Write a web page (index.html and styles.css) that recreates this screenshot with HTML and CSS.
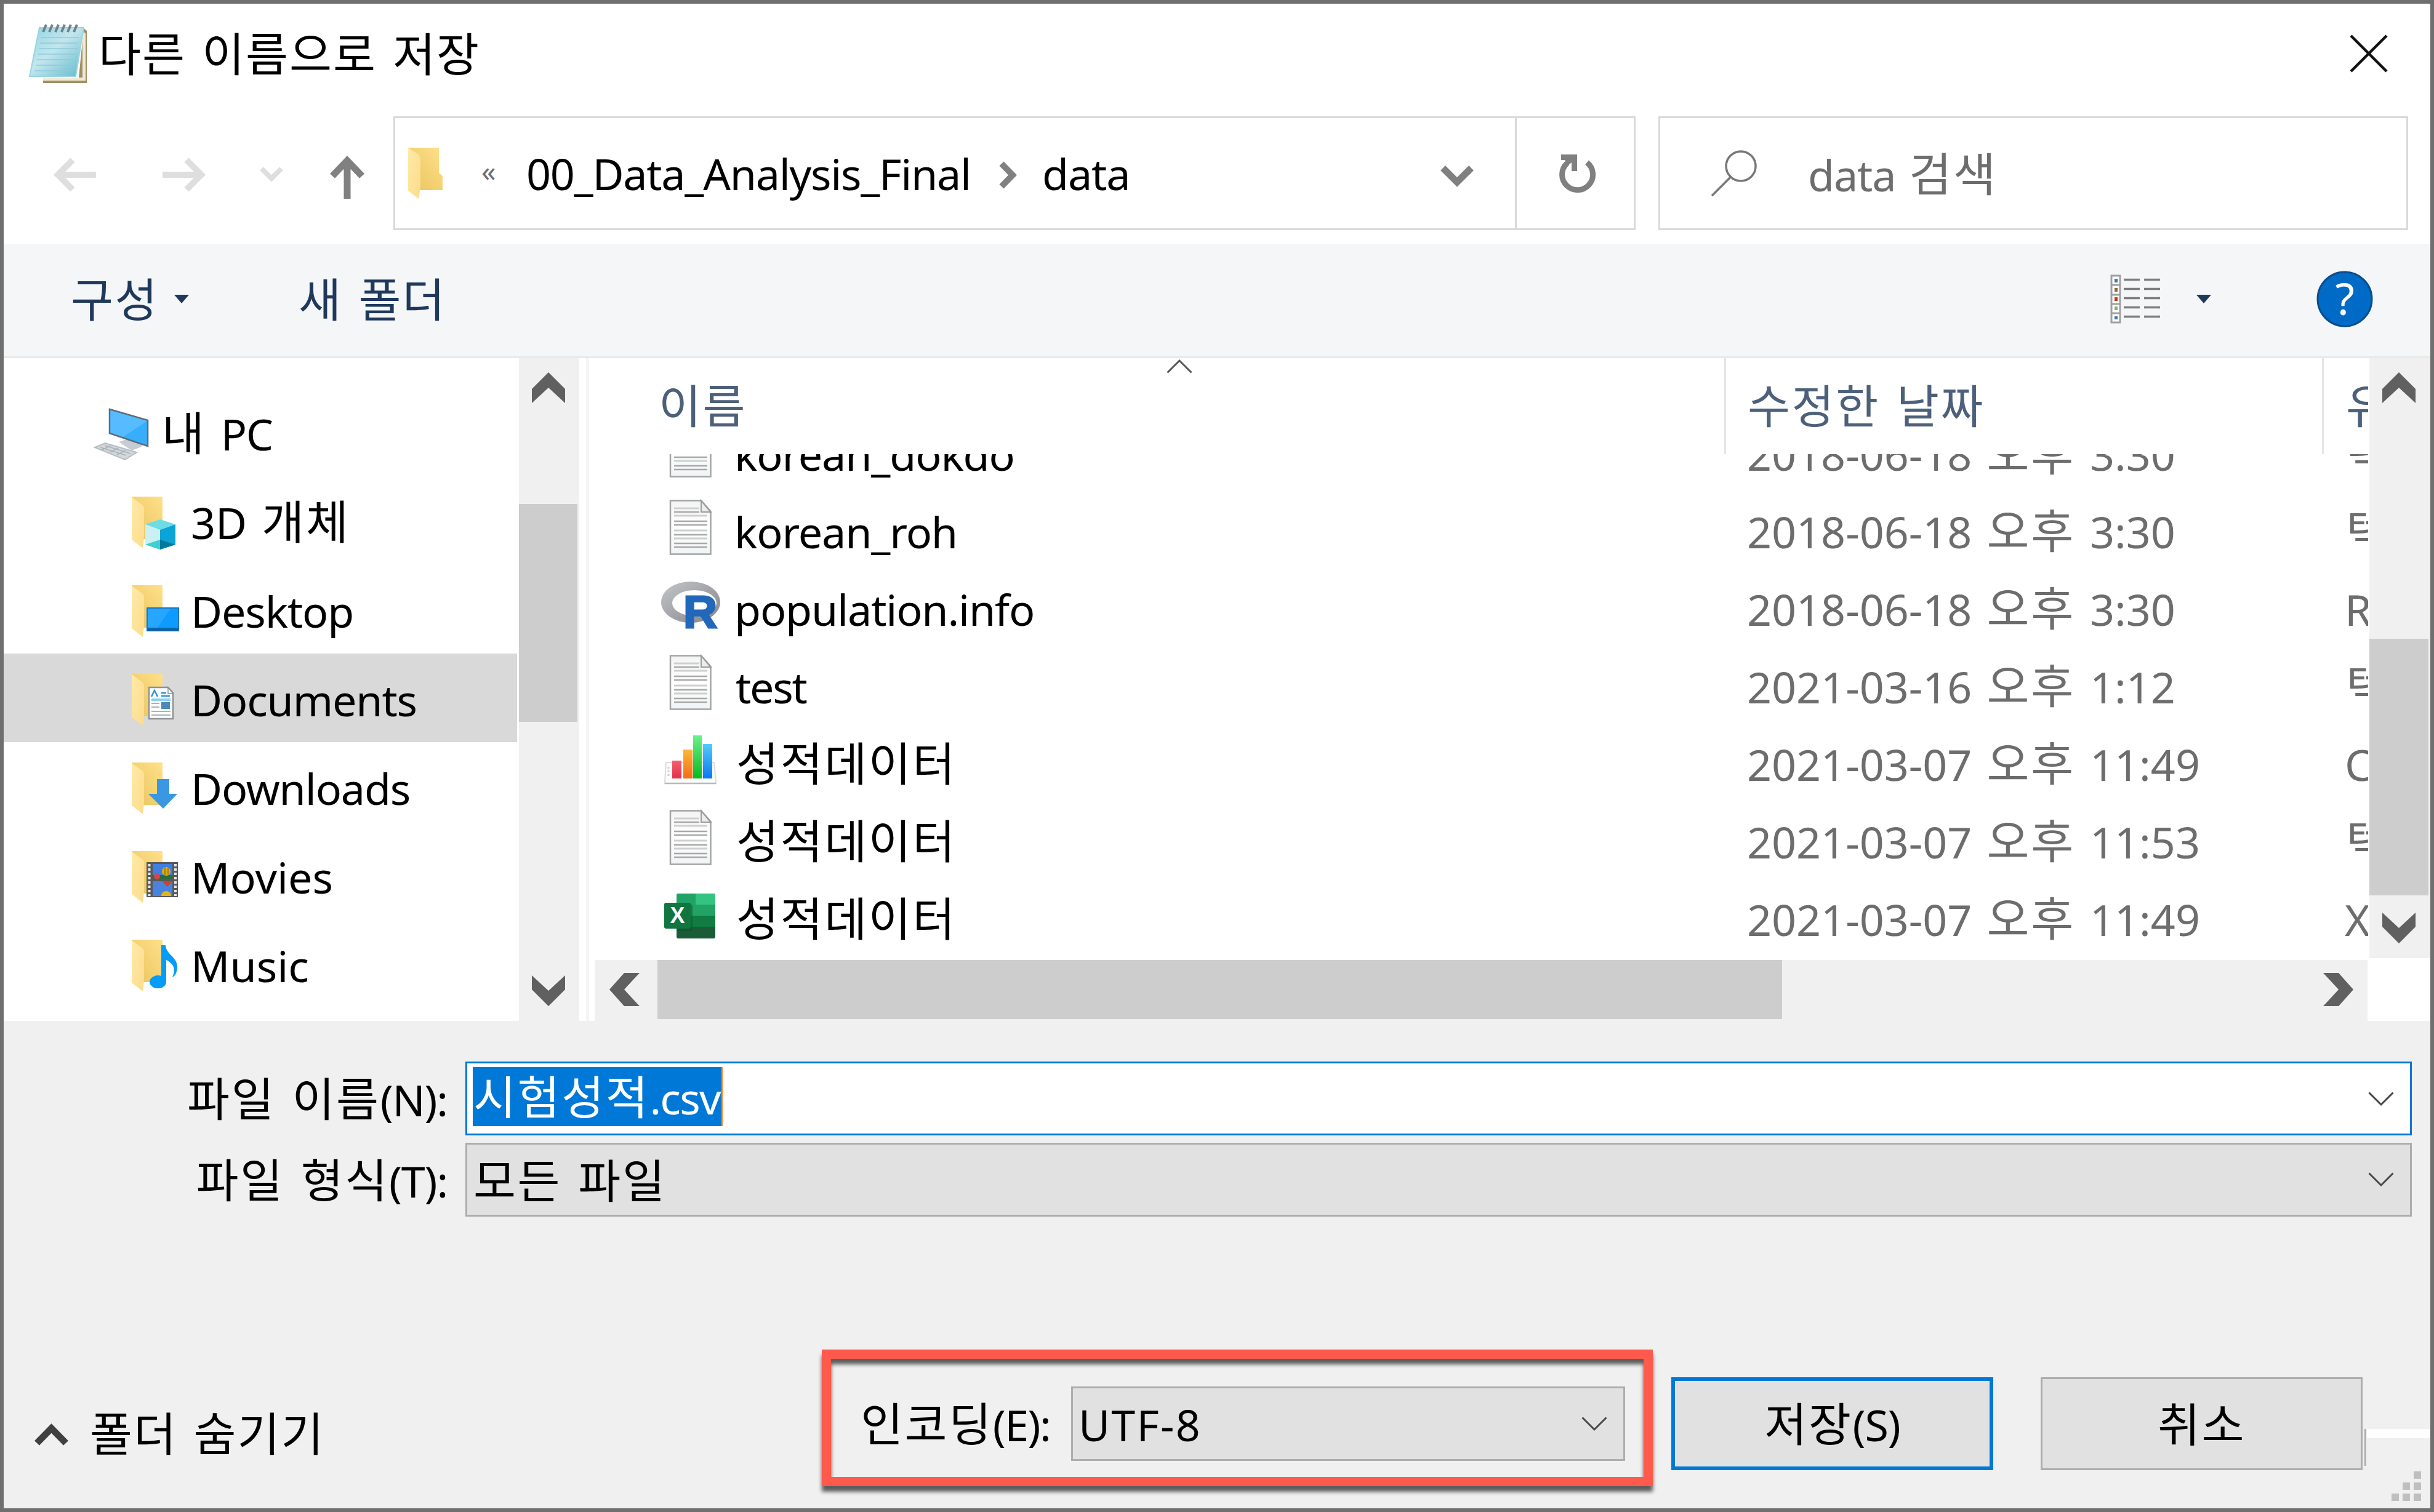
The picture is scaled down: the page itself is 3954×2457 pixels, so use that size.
FILE: index.html
```html
<!DOCTYPE html>
<html lang="ko">
<head>
<meta charset="utf-8">
<title>다른 이름으로 저장</title>
<link rel="stylesheet" href="styles.css">
</head>
<body>
<svg class="defs" aria-hidden="true">
  <defs>
    <linearGradient id="gBack" x1="0" y1="1" x2="1" y2="0"><stop offset="0" stop-color="#e9c35d"/><stop offset="1" stop-color="#ffe08a"/></linearGradient>
    <linearGradient id="gFlap" x1="0" y1="0" x2="1" y2="1"><stop offset="0" stop-color="#ffeaa8"/><stop offset="1" stop-color="#fbdc8b"/></linearGradient>
    <linearGradient id="gPage" x1="0" y1="0" x2="0" y2="1"><stop offset="0" stop-color="#f4f4f4"/><stop offset=".5" stop-color="#fff"/><stop offset="1" stop-color="#f1f4f5"/></linearGradient>
    <linearGradient id="gPad" x1="0" y1="0" x2="1" y2="1"><stop offset="0" stop-color="#8fd4e2"/><stop offset=".45" stop-color="#c3e6ee"/><stop offset="1" stop-color="#5fb9cc"/></linearGradient>
    <linearGradient id="gRing" x1="0" y1="0" x2="1" y2="1"><stop offset="0" stop-color="#c4c5c9"/><stop offset="1" stop-color="#85868b"/></linearGradient>
    <linearGradient id="gRed" x1="0" y1="0" x2="0" y2="1"><stop offset="0" stop-color="#f55f6c"/><stop offset="1" stop-color="#e0304a"/></linearGradient>
    <linearGradient id="gOrange" x1="0" y1="0" x2="0" y2="1"><stop offset="0" stop-color="#fdb83a"/><stop offset="1" stop-color="#f36c14"/></linearGradient>
    <linearGradient id="gGreen" x1="0" y1="0" x2="0" y2="1"><stop offset="0" stop-color="#6cf08c"/><stop offset="1" stop-color="#06b91f"/></linearGradient>
    <linearGradient id="gBlue" x1="0" y1="0" x2="0" y2="1"><stop offset="0" stop-color="#52ccfc"/><stop offset="1" stop-color="#0a78f4"/></linearGradient>
    <g id="folder">
      <path d="M214 33H264V102H232Z" fill="url(#gBack)"/>
      <path d="M214 34L232 47Q234 49 234 53V98L232 117L214 103Z" fill="url(#gFlap)"/>
    </g>
    <g id="sheet">
      <path d="M1089 15.500H1139L1154.500 33V102.500H1089Z" fill="url(#gPage)" stroke="#a2a5a6" stroke-width="2.500"/>
      <path d="M1139 15.500V34H1154.500Z" fill="#ededed" stroke="#9a9c9d" stroke-width="2"/>
      <path d="M1095 28H1136M1095 40H1149M1095 64H1149M1095 77H1149" stroke="#cfd0d0" stroke-width="3"/>
      <path d="M1095 34H1136M1095 49H1149M1095 55H1149M1095 71H1149M1095 85H1149M1095 91H1149" stroke="#a8a9a9" stroke-width="2.500"/>
    </g>
    <path id="combo" d="M1.500 1.500L21 21L40.500 1.500" fill="none" stroke="#484848" stroke-width="3"/>
  </defs>
</svg>

<div class="window">
  <header class="titlebar">
    <svg class="app-icon" width="98" height="100" viewBox="45 37 98 100">
      <path d="M136 46L141 50V135H70V126H128Z" fill="#a08f63"/>
      <path d="M70 126H134V51L139 54V131H70Z" fill="#efe9d6"/>
      <path d="M64 45H136L123 124H48Z" fill="url(#gPad)" stroke="#9ad5e1" stroke-width="2"/>
      <path d="M66 61H128M65 70H127M64 79H126M62 88H124M60 97H122M58 106H121M56 115H119" stroke="#8ccad7" stroke-width="2" opacity=".7"/>
      <path d="M70 52L75 40M80 52L85 40M90 52L95 40M100 52L105 40M110 52L115 40M120 52L125 40" stroke="#6f8388" stroke-width="4"/>
    </svg>
    <h1 class="title ko">다른 이름으로 저장</h1>
    <svg class="close" width="62" height="62" viewBox="0 0 62 62"><path d="M2 2L60 60M60 2L2 60" stroke="#111" stroke-width="4.500"/></svg>
  </header>

  <nav class="navbar">
    <div class="nav-buttons">
      <svg width="512" height="90" viewBox="85 240 512 90" fill="none">
        <path d="M156 285H97M118 261L94 285L118 309" stroke="#dedede" stroke-width="10"/>
        <path d="M264 285H323M303 261L327 285L303 309" stroke="#dedede" stroke-width="10"/>
        <path d="M425 275L441 291L457 275" stroke="#dedede" stroke-width="8"/>
        <path d="M564 324V262M540 287L564 262L588 287" stroke="#808080" stroke-width="11"/>
      </svg>
    </div>
    <div class="path-box">
      <div class="crumbs">
        <svg class="crumb-folder" width="57" height="86" viewBox="664 239 57 86">
          <path d="M664 240H714V281L720 286V309H680Z" fill="url(#gBack)"/>
          <path d="M664 240L681 251Q684 254 684 260V305L681 323L664 310Z" fill="url(#gFlap)"/>
        </svg>
        <span class="more">«</span>
        <span class="crumb crumb-parent">00_Data_Analysis_Final</span>
        <svg class="crumb-sep" width="29" height="45" viewBox="0 0 29 45"><path d="M4 4L22 22.500L4 41" fill="none" stroke="#808080" stroke-width="10"/></svg>
        <span class="crumb">data</span>
        <svg class="crumb-drop" width="54" height="38" viewBox="0 0 54 38"><path d="M4 5L27 28L50 5" fill="none" stroke="#808080" stroke-width="11"/></svg>
      </div>
      <div class="refresh">
        <svg width="64" height="70" viewBox="2530 248 64 70"><path d="M2577 265A25 25 0 1 1 2545 266" fill="none" stroke="#808080" stroke-width="9"/><path d="M2535 252H2561V279H2552V265L2546 270L2541 261H2535Z" fill="#808080"/></svg>
      </div>
    </div>
    <div class="search-box">
      <svg width="76" height="76" viewBox="2779 244 76 76" fill="none" stroke="#777" stroke-width="3.500"><circle cx="2828" cy="270" r="24"/><path d="M2811 288L2781 318"/></svg>
      <span class="search-text">data <span class="ko">검색</span></span>
    </div>
  </nav>

  <div class="toolbar">
    <span class="tool ko organize">구성</span>
    <svg class="tri" width="24" height="14" viewBox="0 0 24 14"><path d="M0 0H24L12 14Z" fill="#1e395b"/></svg>
    <span class="tool ko new-folder">새 폴더</span>
    <svg class="view-icon" width="82" height="80" viewBox="3429 446 82 80">
      <path d="M3431 448H3445V524H3431ZM3431 463H3445M3431 479H3445M3431 494H3445M3431 509H3445" fill="#fff" stroke="#a0a0a0" stroke-width="3"/>
      <path d="M3451 454.500H3477M3484 454.500H3510M3451 469.500H3477M3484 469.500H3510M3451 484.500H3477M3484 484.500H3510M3451 499.500H3477M3484 499.500H3510M3451 514.500H3477M3484 514.500H3510" stroke="#7d7d7d" stroke-width="3.500"/>
      <path d="M3436 453H3441V459H3436ZM3436 514H3441V519H3436Z" fill="#3b7b9c"/><path d="M3436 468H3441V474H3436Z" fill="#8a6d3b"/><path d="M3436 483H3441V489H3436Z" fill="#c4351c"/><path d="M3436 498H3441V504H3436Z" fill="#86b36a"/>
    </svg>
    <svg class="tri" width="24" height="14" viewBox="0 0 24 14"><path d="M0 0H24L12 14Z" fill="#1e395b"/></svg>
    <svg class="help" width="92" height="92" viewBox="0 0 92 92"><circle cx="46" cy="46" r="44" fill="#006ac7" stroke="#0a4d8c" stroke-width="3"/><text x="46" y="72" text-anchor="middle" class="help-mark">?</text></svg>
  </div>

  <div class="main">
    <div class="tree">
      <div class="node root">
        <svg width="100" height="144" viewBox="148 0 100 144">
          <path d="M154 97L171 90L222 105L203 117Z" fill="#d3d8dc" stroke="#b6bcc1" stroke-width="2"/>
          <path d="M163 97L205 110M170 94L212 107M166 101L180 94M178 105L192 98M190 109L204 102" stroke="#a9b0b6" stroke-width="1.500"/>
          <path d="M193 88L212 82L230 90L230 96L214 102Z" fill="#c5ccd2"/>
          <path d="M178 35L240 53V95L178 74Z" fill="#36aefc" stroke="#5d6c78" stroke-width="2.500"/>
          <path d="M179.500 37L239 54L200 80L179.500 73Z" fill="#56bcff"/>
        </svg>
        <span class="label"><span class="ko">내</span> PC</span>
      </div>
      <div class="node">
        <svg width="100" height="144" viewBox="208 0 100 144"><use href="#folder"/><path d="M260 70L285 78L260 87L236 78Z" fill="#6fdbe4"/><path d="M236 78L260 87V119L236 111Z" fill="#c9f1f4"/><path d="M285 78L260 87V119L285 111Z" fill="#0aa5d6"/><path d="M236 111L260 103V119Z" fill="#3fcfd3"/><path d="M285 111L260 103V119Z" fill="#037a9d"/></svg>
        <span class="label wide">3D <span class="ko">개체</span></span>
      </div>
      <div class="node">
        <svg width="100" height="144" viewBox="208 0 100 144"><use href="#folder"/><rect x="239" y="70" width="51" height="37" fill="#0d9bff" stroke="#1478c4" stroke-width="2"/><path d="M240 71H277L256 102H240Z" fill="#27a6ff"/><rect x="239" y="102" width="51" height="5" fill="#0c62a8"/></svg>
        <span class="label">Desktop</span>
      </div>
      <div class="node selected">
        <svg width="100" height="144" viewBox="208 0 100 144"><use href="#folder"/><path d="M242 55H273L281 64V106H242Z" fill="#fafcfd" stroke="#8e9294" stroke-width="2.500"/><path d="M273 55V65H281Z" fill="#fff" stroke="#8e9294" stroke-width="1.500"/><path d="M246 70L251 60L256 70M262 64H270M262 69H276" stroke="#2b95d2" stroke-width="2.500" fill="none"/><path d="M246 75H277" stroke="#8fd0ef" stroke-width="4"/><rect x="262" y="79" width="14" height="11" fill="#4b88b9"/><path d="M246 81H259M246 87H259M246 94H277M246 100H277" stroke="#aeb2b5" stroke-width="2"/></svg>
        <span class="label">Documents</span>
      </div>
      <div class="node">
        <svg width="100" height="144" viewBox="208 0 100 144"><use href="#folder"/><path d="M255 60H275V84H288L265 108L241 84H255Z" fill="#3a97e4"/></svg>
        <span class="label">Downloads</span>
      </div>
      <div class="node">
        <svg width="100" height="144" viewBox="208 0 100 144"><use href="#folder"/><rect x="238" y="51" width="51" height="57" fill="#585858"/><path d="M242.500 54V106M285 54V106" stroke="#e8e8e8" stroke-width="4" stroke-dasharray="4 3"/><rect x="248" y="54" width="32" height="24" fill="#3f7fe0"/><rect x="248" y="82" width="32" height="24" fill="#4a83dc"/><path d="M248 72H280V78H248Z" fill="#2a6c3c"/><circle cx="270" cy="66" r="7" fill="#d9b10d"/><circle cx="255" cy="74" r="5" fill="#d44552"/><path d="M263 82H280L272 91Z" fill="#c9452d"/><path d="M262 106A8 8 0 0 1 278 106Z" fill="#e0b616"/><path d="M268 60V72M273 61V71" stroke="#9a6a12" stroke-width="1.500"/></svg>
        <span class="label even">Movies</span>
      </div>
      <div class="node">
        <svg width="100" height="144" viewBox="208 0 100 144"><use href="#folder"/><path d="M262 42H269C270 58 288 60 288 78C288 84 285 92 280 94C286 80 282 72 270 66V101A13.500 10.500 0 1 1 262 92Z" fill="#059cf7"/></svg>
        <span class="label even">Music</span>
      </div>
    </div>
    <div class="vscroll tree-scroll">
      <svg width="54" height="50" viewBox="0 0 54 50"><path d="M27 0L54 27V50L27 25L0 50V27Z" fill="#606060"/></svg>
      <div class="thumb"></div>
      <svg width="54" height="50" viewBox="0 0 54 50"><path d="M27 50L54 23V0L27 25L0 0V23Z" fill="#606060"/></svg>
    </div>
    <div class="splitter"></div>
    <div class="files">
      <div class="list">
        <div class="list-head">
          <span class="ko col-name">이름</span>
          <svg class="sort" width="42" height="24" viewBox="0 0 42 24"><path d="M1.500 22.500L21 3L40.500 22.500" fill="none" stroke="#555" stroke-width="3"/></svg>
          <span class="ko col-date">수정한 날짜</span>
          <span class="ko col-type">유형</span>
        </div>
        <div class="rows">
          <div class="row"><svg width="96" height="126" viewBox="1074 0 96 126"><use href="#sheet"/></svg><span class="name">korean_dokdo</span><span class="date">2018-06-18 <span class="ko">오후</span> 3:30</span><span class="type ko">텍스트</span></div>
          <div class="row"><svg width="96" height="126" viewBox="1074 0 96 126"><use href="#sheet"/></svg><span class="name">korean_roh</span><span class="date">2018-06-18 <span class="ko">오후</span> 3:30</span><span class="type ko">텍스트</span></div>
          <div class="row"><svg width="96" height="126" viewBox="1074 0 96 126">
            <path fill-rule="evenodd" d="M1074 54.500A48 33.500 0 1 1 1170 54.500A48 33.500 0 1 1 1074 54.500ZM1092 56A36 21 0 1 0 1164 56A36 21 0 1 0 1092 56Z" fill="url(#gRing)"/>
            <text x="1110" y="96" class="r-mark" textLength="54" lengthAdjust="spacingAndGlyphs">R</text></svg><span class="name">population.info</span><span class="date">2018-06-18 <span class="ko">오후</span> 3:30</span><span class="type">R</span></div>
          <div class="row"><svg width="96" height="126" viewBox="1074 0 96 126"><use href="#sheet"/></svg><span class="name tight">test</span><span class="date">2021-03-16 <span class="ko">오후</span> 1:12</span><span class="type ko">텍스트</span></div>
          <div class="row"><svg width="96" height="126" viewBox="1074 0 96 126">
            <path d="M1082 63H1160L1163 94V97H1080V94Z" fill="#fbfbfb" stroke="#dcdcdc" stroke-width="2"/><path d="M1080 97H1163" stroke="#b9b9b9" stroke-width="2.500"/><path d="M1086 70V88" stroke="#d0d0d0" stroke-width="3" stroke-dasharray="3 3"/>
            <rect x="1092" y="60" width="15" height="29" fill="url(#gRed)"/><rect x="1110" y="42" width="15" height="47" fill="url(#gOrange)"/><rect x="1126" y="19" width="14" height="70" fill="url(#gGreen)"/><rect x="1142" y="33" width="15" height="56" fill="url(#gBlue)"/></svg><span class="name ko">성적데이터</span><span class="date">2021-03-07 <span class="ko">오후</span> 11:49</span><span class="type">C</span></div>
          <div class="row"><svg width="96" height="126" viewBox="1074 0 96 126"><use href="#sheet"/></svg><span class="name ko">성적데이터</span><span class="date">2021-03-07 <span class="ko">오후</span> 11:53</span><span class="type ko">텍스트</span></div>
          <div class="row"><svg width="96" height="126" viewBox="1074 0 96 126">
            <rect x="1099" y="24" width="63" height="73" rx="3" fill="#1b5c37"/><path d="M1099 27Q1099 24 1102 24H1130V60H1099Z" fill="#21a366"/><path d="M1130 24H1159Q1162 24 1162 27V42H1130Z" fill="#33c481"/><path d="M1130 42H1162V60H1130Z" fill="#21a366"/><path d="M1099 60H1162V78H1099Z" fill="#107c41"/><rect x="1101" y="42" width="24" height="43" rx="2" fill="#0d4f2c" opacity=".5"/><rect x="1079" y="39" width="43" height="42" rx="3" fill="#10753f"/>
            <text x="1100.500" y="72" text-anchor="middle" class="x-mark">X</text></svg><span class="name ko">성적데이터</span><span class="date">2021-03-07 <span class="ko">오후</span> 11:49</span><span class="type">X</span></div>
        </div>
      </div>
      <div class="vscroll list-scroll">
        <svg width="54" height="50" viewBox="0 0 54 50"><path d="M27 0L54 27V50L27 25L0 50V27Z" fill="#606060"/></svg>
        <div class="thumb"></div>
        <svg width="54" height="50" viewBox="0 0 54 50"><path d="M27 50L54 23V0L27 25L0 0V23Z" fill="#606060"/></svg>
      </div>
      <div class="hscroll">
        <svg width="49" height="54" viewBox="0 0 49 54"><path d="M0 27L24 0H49L24 27L49 54H24Z" fill="#606060"/></svg>
        <div class="thumb"></div>
        <svg width="49" height="54" viewBox="0 0 49 54"><path d="M49 27L25 0H0L25 27L0 54H25Z" fill="#606060"/></svg>
      </div>
    </div>
  </div>

  <footer class="footer">
    <div class="form">
      <label class="form-label"><span class="ko">파일 이름</span>(N):</label>
      <div class="field name-field"><span class="selection"><span class="ko">시험성적</span>.csv</span><svg width="42" height="24" viewBox="0 0 42 24"><use href="#combo"/></svg></div>
      <label class="form-label"><span class="ko">파일 형식</span>(T):</label>
      <div class="field type-field"><span class="ko">모든 파일</span><svg width="42" height="24" viewBox="0 0 42 24"><use href="#combo"/></svg></div>
    </div>
    <div class="actions">
      <div class="hide-folders"><svg width="55" height="38" viewBox="0 0 55 38"><path d="M4 33L27.500 9L51 33" fill="none" stroke="#404040" stroke-width="11"/></svg><span class="ko">폴더 숨기기</span></div>
      <label class="encoding-label"><span class="ko">인코딩</span>(E):</label>
      <div class="field encoding"><span class="utf">UTF-8</span><svg width="42" height="24" viewBox="0 0 42 24"><use href="#combo"/></svg></div>
      <div class="button primary"><span><span class="ko">저장</span>(S)</span></div>
      <div class="button"><span class="ko">취소</span></div>
    </div>
  </footer>

  <div class="callout"></div>
  <svg class="behind" width="600" height="6" viewBox="0 0 600 6"><path d="M131 0L134 5M225 0L221 5M362 0H405V4H362ZM436 0H480V4H436ZM503 0L506 5M579 0L575 5" fill="#3c3c3c" stroke="#3c3c3c" stroke-width="3"/></svg>
  <svg class="grip" width="110" height="130" viewBox="3838 2320 110 130"><path d="M3841 2322H3843.500V2382H3841Z" fill="#a8a8a8"/><path d="M3845 2322H3947V2337H3845Z" fill="#fff"/><path d="M3921 2391h12v12h-12zM3903 2409h12v12h-12zM3921 2409h12v12h-12zM3885 2427h12v12h-12zM3903 2427h12v12h-12zM3921 2427h12v12h-12z" fill="#bfbfbf"/></svg>
</div>
</body>
</html>
```
FILE: styles.css
```css
* { box-sizing: border-box; }
body {
  margin: 0;
  font-family: "Noto Sans", "Noto Sans CJK KR", sans-serif;
  font-size: 70px;
  line-height: 100px;
  letter-spacing: -1.15px;
  word-spacing: 5px;
  color: #000;
  white-space: nowrap;
}
svg { display: block; flex: none; }
.defs { position: absolute; width: 0; height: 0; }
.ko { font-family: "Noto Sans", "Noto Sans CJK KR", sans-serif; font-size: 75px; letter-spacing: 2.6px; font-weight: 400; }
span .ko, label .ko { line-height: 0; }

.window {
  position: relative;
  width: 3954px;
  height: 2457px;
  border: 6px solid #6f6f6f;
  background: #fff;
  display: flex;
  flex-direction: column;
  overflow: hidden;
}

/* title bar */
.titlebar { height: 168px; display: flex; align-items: center; padding: 0 69px 0 39px; }
.app-icon { margin-bottom: 6px; }
.title { margin: 0 auto 0 17px; padding-bottom: 6px; letter-spacing: 1.9px; }
.close { margin-bottom: 7px; }

/* navigation */
.navbar { height: 222px; padding: 15px 36px 22px 79px; display: flex; }
.nav-buttons { width: 554px; display: flex; align-items: center; padding-top: 4px; }
.path-box { width: 2018px; display: flex; border: 3px solid #d9d9d9; margin-right: 37px; }
.crumbs { flex: 1; display: flex; align-items: center; }
.crumb-folder { margin-left: 21px; }
.more { width: 24px; margin-left: 62px; padding-bottom: 9px; font-size: 46px; color: #6d6d6d; }
.crumb-parent { width: 769px; margin-left: 49px; letter-spacing: -1.25px; }
.crumb-sep { margin: 6px 41px 0 -1px; }
.crumb-drop { margin: 10px 67px 0 auto; }
.refresh { width: 193px; border-left: 3px solid #d9d9d9; display: flex; align-items: center; justify-content: center; padding-left: 7px; }
.search-box { flex: 1; border: 3px solid #d9d9d9; display: flex; align-items: center; padding-left: 82px; }
.search-text { color: #6d6d6d; padding-top: 5px; margin-left: 82px; }

/* command bar */
.toolbar { height: 186px; background: #f4f6f8; border-bottom: 3px solid #e7e9eb; display: flex; align-items: center; padding: 0 93px 3px 109px; color: #1e395b; }
.tool { padding-top: 0; }
.organize { width: 168px; }
.new-folder { margin: 0 auto 0 178px; letter-spacing: 2px; }
.view-icon { margin-right: 58px; }
.help { margin-left: 171px; }
.help-mark { font-size: 72px; fill: #fff; letter-spacing: 0; }

/* file browser */
.main { height: 1077px; display: flex; }
.tree { width: 837px; padding: 48px 3px 0 0; }
.node { height: 144px; display: flex; align-items: center; padding-left: 202px; }
.root { padding-left: 142px; }
.root .label { margin-left: 15px; word-spacing: 7px; }
.label { padding-top: 5px; margin-left: 2px; }
.wide { letter-spacing: 0; word-spacing: 6px; }
.even { letter-spacing: 0; }
.selected { background: #d9d9d9; }

.vscroll { background: #f0f0f0; display: flex; flex-direction: column; }
.vscroll svg { margin-left: 21px; }
.tree-scroll { width: 98px; padding: 23px 0 24px; }
.tree-scroll .thumb { width: 95px; height: 354px; margin-top: 164px; margin-bottom: auto; background: #cdcdcd; }
.list-scroll { padding: 23px 0 24px; }
.list-scroll .thumb { width: 96px; height: 417px; margin-top: 383px; margin-bottom: auto; background: #cdcdcd; }
.splitter { width: 25px; border: solid #fff; border-width: 0 9px 0 11px; background: #f5f5f5; }

.files { flex: 1; display: grid; grid-template-columns: 2883px 1fr; grid-template-rows: 975px 102px; }
.list { overflow: hidden; display: flex; flex-direction: column; margin-right: 2px; }
.list-head { height: 156px; display: flex; color: #4c607a; flex: none; overflow: hidden; }
.list-head > *, .row > * { flex: none; }
.col-name { width: 929px; padding: 27px 0 0 104px; }
.sort { margin-top: 1px; }
.col-date { width: 971px; margin-left: 864px; border-left: 3px solid #e5e5e5; padding: 27px 0 0 35px; }
.col-type { border-left: 3px solid #e5e5e5; padding: 27px 0 0 36px; }
.rows { flex: 1; overflow: hidden; display: flex; flex-direction: column; justify-content: flex-end; padding-bottom: 3px; }
.row { height: 126px; flex: none; display: flex; align-items: center; padding-left: 108px; }
.name { width: 1645px; margin-left: 23px; padding-top: 6px; }
.name.ko { padding: 2px 0 0 3px; }
.tight { letter-spacing: -2.3px; padding-left: 2px; }
.date { width: 971px; padding-top: 6px; color: #6d6d6d; letter-spacing: 0; word-spacing: 6px; }
.type { padding-top: 6px; color: #6d6d6d; letter-spacing: 0; }
.type.ko { padding: 2px 0 0 2px; }

.hscroll { margin: 3px 3px 0 0; background: #f0f0f0; display: flex; align-items: center; padding: 0 23px 3px 24px; }
.hscroll .thumb { width: 1827px; height: 96px; margin: 0 auto 0 29px; background: #cdcdcd; }

/* footer */
.footer { flex: 1; background: #f0f0f0; padding-top: 66px; }
.form { display: grid; grid-template-columns: 725px 3162px; grid-template-rows: 120px 120px; column-gap: 25px; row-gap: 12px; }
.form-label { text-align: right; padding: 12px 4px 0 0; }
.field { display: flex; align-items: center; justify-content: space-between; background: #e1e1e1; border: 3px solid #adadad; }
.name-field { background: #fff; border-color: #0078d7; padding: 0 26px 0 9px; }
.selection { height: 96px; line-height: 100px; margin-bottom: 6px; width: 406px; padding-left: 1px; letter-spacing: -1.8px; background: #0078d7; color: #fff; border-right: 2px solid #ff8728; }
.name-field svg { margin-top: 1px; }
.type-field { padding: 0 26px 0 10px; }
.type-field .ko { padding-top: 2px; }

.actions { margin-top: 261px; height: 151px; display: flex; align-items: center; padding-left: 50px; }
.hide-folders { width: 1342px; display: flex; align-items: center; padding-top: 35px; }
.hide-folders .ko { margin: 0 0 5px 35px; letter-spacing: 2px; }
.encoding-label { width: 342px; padding-top: 3px; letter-spacing: -1.6px; }
.encoding { width: 900px; height: 121px; padding: 0 26px 0 9px; margin-right: 75px; }
.encoding .utf { letter-spacing: 2.2px; padding-top: 3px; }
.button { width: 523px; height: 151px; border: 3px solid #adadad; background: #e1e1e1; display: flex; align-items: center; justify-content: center; padding-top: 3px; }
.button > .ko { padding-bottom: 3px; }
.primary { border: 6px solid #0078d7; margin-right: 77px; }

/* overlays */
.callout { position: absolute; left: 1329px; top: 2187px; width: 1350px; height: 222px; border: 15px solid #ff5a4b; filter: drop-shadow(0 9px 3px rgba(0, 0, 0, .62)); }
.behind { position: absolute; left: 0; top: -6px; }
.grip { position: absolute; right: 0; bottom: 1px; }

.r-mark { font: bold 75px "Liberation Sans", sans-serif; fill: #2268ba; stroke: #2268ba; stroke-width: 3px; }
.x-mark { font: bold 36px "Liberation Sans", sans-serif; fill: #fff; letter-spacing: 0; }
```
